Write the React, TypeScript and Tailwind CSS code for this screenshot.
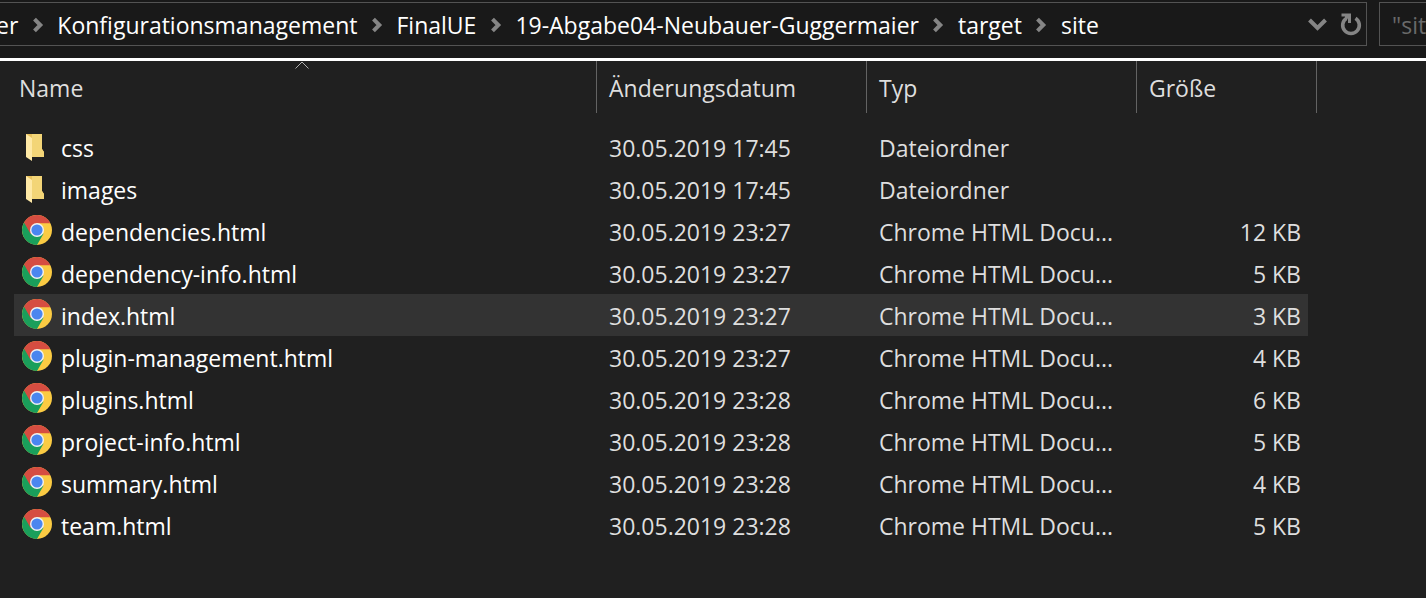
const crumbs = ["er", "Konfigurationsmanagement", "FinalUE", "19-Abgabe04-Neubauer-Guggermaier", "target", "site"];

type Entry = { name: string; date: string; size?: string; selected?: boolean };

const entries: Entry[] = [
  { name: "css", date: "30.05.2019 17:45" },
  { name: "images", date: "30.05.2019 17:45" },
  { name: "dependencies.html", date: "30.05.2019 23:27", size: "12 KB" },
  { name: "dependency-info.html", date: "30.05.2019 23:27", size: "5 KB" },
  { name: "index.html", date: "30.05.2019 23:27", size: "3 KB", selected: true },
  { name: "plugin-management.html", date: "30.05.2019 23:27", size: "4 KB" },
  { name: "plugins.html", date: "30.05.2019 23:28", size: "6 KB" },
  { name: "project-info.html", date: "30.05.2019 23:28", size: "5 KB" },
  { name: "summary.html", date: "30.05.2019 23:28", size: "4 KB" },
  { name: "team.html", date: "30.05.2019 23:28", size: "5 KB" },
];

function Folder() {
  return (
    <svg viewBox="0 0 30 30" className="size-[30px]" aria-hidden="true">
      <path d="M4 3h16v15l2 3v5H4z" fill="#e9c15c" />
      <path d="M10 3h10v15l2 3v5H10z" fill="#f3d577" />
      <path d="M4 3l6 4v23l-6-4z" fill="#ffe9a6" />
    </svg>
  );
}

function Chrome() {
  return (
    <svg viewBox="0 0 30 30" className="size-[30px]" aria-hidden="true">
      <circle cx="15" cy="15" r="15" fill="#fbcb43" />
      <path d="M15 15L2.01 7.5A15 15 0 0 0 15 30l6.5-11.25z" fill="#1a9f5b" />
      <path d="M15 15l-6.500 3.750L2.010 7.500A15 15 0 0 1 28.300 8.200H15z" fill="#d64d41" />
      <circle cx="15" cy="15" r="7" fill="#f1f1f1" />
      <circle cx="15" cy="15" r="5.600" fill="#4a86ef" />
    </svg>
  );
}

function Chevron() {
  return (
    <svg viewBox="0 0 12 16" className="h-4 w-3 shrink-0" fill="none" stroke="#858585" strokeWidth="4" aria-hidden="true">
      <path d="M2.500 2.200L8.300 8l-5.800 5.800" />
    </svg>
  );
}

export default function App() {
  return (
    <div className="flex min-h-screen flex-col overflow-hidden bg-[#202020] font-['Open_Sans',sans-serif] text-[23px] leading-[34px] text-[#dedede]">
      <header className="flex h-[61px] items-start gap-3 overflow-hidden border-b-[3px] border-white bg-[#191919] pt-[2px]">
        <div className="flex h-11 min-w-0 flex-1 items-center justify-between border border-l-0 border-[#535353]">
          <nav aria-label="Pfad" className="-ml-1 flex items-center pt-[2px] whitespace-nowrap text-white">
            {crumbs.map((crumb, i) => (
              <div key={crumb} className="flex items-center">
                {i > 0 && (
                  <span className="flex w-[39px] justify-center">
                    <Chevron />
                  </span>
                )}
                <a href="#">{crumb}</a>
              </div>
            ))}
          </nav>
          <div className="flex items-center gap-3 pr-1">
            <button type="button" aria-label="Verlauf">
              <svg viewBox="0 0 20 14" className="h-[14px] w-5" fill="none" stroke="#858585" strokeWidth="4" aria-hidden="true">
                <path d="M1.500 3L9.500 11l8-8" />
              </svg>
            </button>
            <button type="button" aria-label="Aktualisieren">
              <svg viewBox="0 0 22 24" className="h-6 w-[22px]" fill="none" aria-hidden="true">
                <path d="M15.500 6.200A8.300 8.300 0 1 1 6.500 6.200" stroke="#858585" strokeWidth="3.600" />
                <path d="M1.500 1.500h9.500V11H8V6.500L5 8.500V4.500H1.500z" fill="#858585" />
              </svg>
            </button>
          </div>
        </div>
        <input
          type="text"
          aria-label="Suchen"
          placeholder={'"site"'}
          className="h-11 w-[47px] shrink-0 appearance-none border border-r-0 border-[#535353] bg-transparent pt-[2px] pl-3 outline-none placeholder:text-[#6a6a6a]"
        />
      </header>

      <main className="flex-1 pr-[109px] pl-[14px]">
        <table className="w-full table-fixed border-separate border-spacing-0 text-left whitespace-nowrap">
          <colgroup>
            <col />
            <col className="w-[270px]" />
            <col className="w-[270px]" />
            <col className="w-[171px]" />
            <col className="w-[9px]" />
          </colgroup>
          <thead>
            <tr className="h-[52px]">
              <th className="relative border-r border-[#636363] pt-[2px] pl-[5px] font-normal">
                Name
                <svg viewBox="0 0 14 8" className="absolute top-0 left-1/2 -ml-[10px] h-2 w-[14px]" fill="none" stroke="#b0b0b0" aria-hidden="true">
                  <path d="M.5 7.500L7 1l6.500 6.500" />
                </svg>
              </th>
              <th className="border-r border-[#636363] pt-[2px] pl-3 font-normal">Änderungsdatum</th>
              <th className="border-r border-[#636363] pt-[2px] pl-3 font-normal">Typ</th>
              <th colSpan={2} className="border-r border-[#636363] pt-[2px] pl-3 font-normal">Größe</th>
            </tr>
          </thead>
          <tbody className="before:block before:h-[13px]">
            {entries.map((entry) => {
              const cell = entry.selected ? "bg-[#333333]" : "";
              return (
                <tr key={entry.name} className="h-[42px]">
                  <td className={`pt-[2px] ${cell}`}>
                    <div className="flex items-start gap-[9px] pl-2 text-white">
                      {entry.size ? <Chrome /> : <Folder />}
                      <span>{entry.name}</span>
                    </div>
                  </td>
                  <td className={`pt-[2px] pl-3 ${cell}`}>{entry.date}</td>
                  <td className={`pt-[2px] pl-3 ${cell}`}>{entry.size ? "Chrome HTML Docu..." : "Dateiordner"}</td>
                  <td className={`pt-[2px] pr-[7px] text-right ${cell}`}>{entry.size}</td>
                </tr>
              );
            })}
          </tbody>
        </table>
      </main>
    </div>
  );
}
